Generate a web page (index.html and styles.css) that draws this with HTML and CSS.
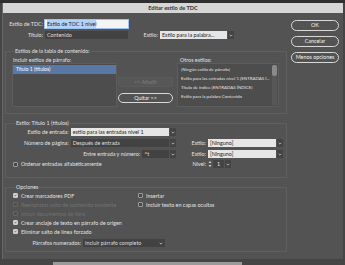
FILE: index.html
```html
<!DOCTYPE html>
<html lang="es">
<head>
    <meta charset="UTF-8">
    <title>Editar estilo de TDC</title>
    <link rel="stylesheet" href="styles.css">
</head>
<body>
    <div class="backdrop"></div>

    <div class="dialog">
        <div class="titlebar">Editar estilo de TDC</div>

        <div class="content">
            <div class="main">
                <div class="row">
                    <span class="lbl head-lbl">Estilo de TDC:</span>
                    <div class="field light focus toc-name"><span class="selected-text">Estilo de TOC 1 nivel</span></div>
                </div>
                <div class="row row-title">
                    <span class="lbl head-lbl">Título:</span>
                    <div class="field dark toc-name">Contenido</div>
                    <span class="lbl title-style-lbl">Estilo:</span>
                    <div class="field light title-style">Estilo para la palabra...</div>
                    <span class="arrow"><svg viewBox="0 0 6 4"><path d="M1 1l2 2 2-2"/></svg></span>
                </div>

                <fieldset class="group group-styles">
                    <legend>Estilos de la tabla de contenido:</legend>
                    <div class="styles-grid">
                        <span class="list-lbl">Incluir estilos de párrafo:</span>
                        <span></span>
                        <span class="list-lbl other-lbl">Otros estilos:</span>

                        <ul class="list">
                            <li class="active">Título 1 (títulos)</li>
                        </ul>
                        <div class="move-btns">
                            <div class="btn disabled add-btn">&lt;&lt; Añadir</div>
                            <div class="btn remove-btn">Quitar &gt;&gt;</div>
                        </div>
                        <div class="list list-scroll">
                            <ul>
                                <li>[Ningún estilo de párrafo]</li>
                                <li>Estilo para las entradas nivel 1 (ENTRADAS I...</li>
                                <li>Título de índice (ENTRADAS ÍNDICE)</li>
                                <li>Estilo para la palabra Contenido</li>
                            </ul>
                            <div class="scrollbar"><div class="thumb"></div></div>
                        </div>
                    </div>
                </fieldset>

                <fieldset class="group group-entry">
                    <legend>Estilo: Título 1 (títulos)</legend>
                    <div class="row">
                        <div class="left-block">
                            <span class="lbl entry-lbl">Estilo de entrada:</span>
                            <div class="field light entry-field">estilo para las entradas nivel 1</div>
                            <span class="arrow"><svg viewBox="0 0 6 4"><path d="M1 1l2 2 2-2"/></svg></span>
                        </div>
                    </div>
                    <div class="row row-gap">
                        <div class="left-block">
                            <span class="lbl entry-lbl">Número de página:</span>
                            <div class="field dark entry-field">Después de entrada</div>
                            <span class="arrow"><svg viewBox="0 0 6 4"><path d="M1 1l2 2 2-2"/></svg></span>
                        </div>
                        <div class="right-block">
                            <span class="lbl small-lbl">Estilo:</span>
                            <div class="field light none-field">[Ninguno]</div>
                            <span class="arrow"><svg viewBox="0 0 6 4"><path d="M1 1l2 2 2-2"/></svg></span>
                        </div>
                    </div>
                    <div class="row row-gap">
                        <div class="left-block">
                            <span class="lbl between-lbl">Entre entrada y número:</span>
                            <div class="field dark between-field">^t</div>
                            <span class="arrow"><svg viewBox="0 0 6 4"><path d="M1 1l2 2 2-2"/></svg></span>
                        </div>
                        <div class="right-block">
                            <span class="lbl small-lbl">Estilo:</span>
                            <div class="field light none-field">[Ninguno]</div>
                            <span class="arrow"><svg viewBox="0 0 6 4"><path d="M1 1l2 2 2-2"/></svg></span>
                        </div>
                    </div>
                    <div class="row row-gap-sm">
                        <div class="left-block">
                            <span class="check"></span>
                            <span>Ordenar entradas alfabéticamente</span>
                        </div>
                        <div class="right-block">
                            <span class="lbl small-lbl">Nivel:</span>
                            <div class="spinner">
                                <span class="spin-btns">
                                    <svg viewBox="0 0 4 8"><path d="M0.5 3l1.5-2 1.5 2zM0.5 5l1.5 2 1.5-2z"/></svg>
                                </span>
                                <span class="spin-value">1</span>
                                <span class="arrow"><svg viewBox="0 0 6 4"><path d="M1 1l2 2 2-2"/></svg></span>
                            </div>
                        </div>
                    </div>
                </fieldset>

                <fieldset class="group group-options">
                    <legend>Opciones</legend>
                    <div class="opt-row">
                        <label class="opt opt-left"><span class="check on"></span>Crear marcadores PDF</label>
                        <label class="opt"><span class="check"></span>Insertar</label>
                    </div>
                    <div class="opt-row">
                        <label class="opt opt-left disabled"><span class="check"></span>Reemplazar salto de contenido existente</label>
                        <label class="opt"><span class="check"></span>Incluir texto en capas ocultas</label>
                    </div>
                    <div class="opt-row">
                        <label class="opt disabled"><span class="check"></span>Incluir documentos de libro</label>
                    </div>
                    <div class="opt-row">
                        <label class="opt"><span class="check on"></span>Crear anclaje de texto en párrafo de origen</label>
                    </div>
                    <div class="opt-row">
                        <label class="opt"><span class="check on"></span>Eliminar salto de línea forzado</label>
                    </div>
                    <div class="row numbered-row">
                        <span class="lbl numbered-lbl">Párrafos numerados:</span>
                        <div class="field dark numbered-field">
                            Incluir párrafo completo
                            <svg viewBox="0 0 6 4"><path d="M1 1l2 2 2-2"/></svg>
                        </div>
                    </div>
                </fieldset>
            </div>

            <div class="side">
                <div class="btn side-btn">OK</div>
                <div class="btn side-btn">Cancelar</div>
                <div class="btn side-btn">Menos opciones</div>
            </div>
        </div>
    </div>

    <div class="under">
        <div class="under-bar"></div>
    </div>
</body>
</html>
```

FILE: styles.css
```css
* {
    box-sizing: border-box;
}
body {
    margin: 0;
    width: 345px;
    height: 265px;
    overflow: hidden;
    background-color: #454545;
    font-family: 'Lato', sans-serif;
    font-size: 5.4px;
    line-height: 6px;
    color: #e2e2e2;
}
.backdrop {
    height: 3px;
    background-color: #2f2f2f;
}
.dialog {
    margin-left: 2px;
    width: 341px;
    height: 256px;
    background-color: #535353;
    border-left: 1px solid #686868;
}
.titlebar {
    height: 10px;
    line-height: 10px;
    background-color: #d6d6d6;
    color: #333;
    font-weight: bold;
    font-size: 5.6px;
    text-align: center;
}
.content {
    display: flex;
    padding: 7px 0 0 2px;
}
.main {
    width: 282px;
}
.side {
    width: 48px;
    margin-left: 4px;
    display: flex;
    flex-direction: column;
    gap: 5px;
}

/* rows and fields */
.row {
    display: flex;
    align-items: center;
    height: 8px;
}
.row-title {
    margin-top: 3px;
}
.lbl {
    text-align: right;
    padding-right: 2px;
    white-space: nowrap;
}
.head-lbl {
    width: 40px;
}
.field {
    height: 8px;
    line-height: 8px;
    padding: 0 2px;
    white-space: nowrap;
    overflow: hidden;
}
.field.light {
    background-color: #e6e6e6;
    color: #1f1f1f;
}
.field.dark {
    background-color: #424242;
    color: #dedede;
}
.field.focus {
    background-color: #f4f4f4;
    box-shadow: 0 0 0 1px #9fc2f0;
    line-height: 8px;
}
.selected-text {
    background-color: #b4d2f6;
    padding: 1px 0;
}
.toc-name {
    width: 83px;
}
.title-style-lbl {
    width: 32px;
}
.title-style {
    width: 67px;
}
.arrow {
    width: 6px;
    height: 8px;
    margin-left: 1px;
    background-color: #444;
    display: flex;
    align-items: center;
    justify-content: center;
}
.arrow svg, .numbered-field svg {
    width: 4px;
    height: 3px;
    fill: none;
    stroke: #e8e8e8;
    stroke-width: 1;
}

/* group boxes */
.group {
    margin: 0;
    border: 1px solid #5f5f5f;
    padding: 0 3px 6px 7px;
    min-width: 0;
}
.group legend {
    padding: 0 1px;
    margin-left: 2px;
    line-height: 6px;
}
.group-styles {
    margin-top: 9px;
    padding-left: 6px;
}
.group-entry {
    margin-top: 6px;
    padding-bottom: 9px;
}
.group-entry > .row:first-of-type {
    margin-top: 2px;
}
.row-gap {
    margin-top: 3px;
}
.row-gap-sm {
    margin-top: 2px;
}
.group-options {
    margin-top: 6px;
    padding-bottom: 4px;
}

/* paragraph style lists */
.styles-grid {
    display: grid;
    grid-template-columns: 105px 56px 106px;
    column-gap: 0;
    margin-top: 3px;
}
.styles-grid > :nth-child(3n) {
    margin-left: 4px;
}
.list-lbl {
    height: 6px;
    padding-left: 1px;
}
.other-lbl {
    padding-left: 3px;
}
.list {
    margin: 0;
    padding: 1px 0 0;
    list-style: none;
    height: 44px;
    background-color: #4d4d4d;
    border: 1px solid #5d5d5d;
    font-size: 4.4px;
}
.list li {
    height: 9px;
    line-height: 9px;
    padding-left: 3px;
    white-space: nowrap;
}
.list li.active {
    background-color: #5a78a6;
    color: #fff;
    font-size: 5px;
}
.list-scroll {
    display: flex;
    padding: 1px 0;
}
.list-scroll ul {
    flex: 1;
    margin: 0;
    padding: 0;
    list-style: none;
    min-width: 0;
}
.scrollbar {
    width: 5px;
    margin-right: 1px;
    background-color: #575757;
}
.thumb {
    height: 11px;
    background-color: #8a8a8a;
    border-radius: 2px;
}
.move-btns {
    display: flex;
    flex-direction: column;
    padding-left: 1px;
}

/* buttons */
.btn {
    height: 10px;
    line-height: 8px;
    text-align: center;
    border: 1px solid #d9d9d9;
    border-radius: 6px;
    color: #f0f0f0;
    white-space: nowrap;
}
.side-btn {
    height: 11px;
    line-height: 9px;
}
.add-btn {
    margin-top: 14px;
}
.remove-btn {
    margin-top: 6px;
}
.btn.disabled {
    border-color: #5c5c5c;
    background-color: #575757;
    color: #7e7e7e;
    border-radius: 2px;
}

/* entry style block */
.left-block {
    width: 163px;
    display: flex;
    align-items: center;
}
.right-block {
    display: flex;
    align-items: center;
    margin-left: 14px;
}
.entry-lbl {
    width: 58px;
}
.entry-field {
    width: 99px;
}
.between-lbl {
    width: 130px;
}
.between-field {
    width: 27px;
}
.small-lbl {
    width: 18px;
}
.none-field {
    width: 68px;
}
.spinner {
    display: flex;
    align-items: center;
    height: 8px;
}
.spin-btns {
    width: 4px;
    height: 8px;
    display: flex;
}
.spin-btns svg {
    width: 4px;
    height: 8px;
    fill: #cfcfcf;
}
.spin-value {
    width: 11px;
    height: 8px;
    line-height: 8px;
    margin-left: 1px;
    text-align: center;
    background-color: #444;
}

/* checkboxes */
.check {
    width: 5px;
    height: 5px;
    margin-right: 3px;
    border: 1px solid #9b9b9b;
    background-color: #474747;
    border-radius: 1px;
    flex-shrink: 0;
}
.check.on {
    border-color: #cfcfcf;
    background-color: #d0d0d0;
    background-image: url("data:image/svg+xml,%3Csvg xmlns='http://www.w3.org/2000/svg' viewBox='0 0 5 5'%3E%3Cpath d='M1 2.6l1 1 2-2.4' fill='none' stroke='%23333' stroke-width='0.9'/%3E%3C/svg%3E");
    background-size: 100% 100%;
}
.opt-row {
    display: flex;
    height: 9px;
    align-items: center;
}
.group-options .opt-row:first-of-type {
    margin-top: 1px;
}
.opt {
    display: flex;
    align-items: center;
    white-space: nowrap;
}
.opt-left {
    width: 125px;
}
.opt.disabled {
    color: #727272;
}
.opt.disabled .check {
    border-color: #666;
    background-color: #4e4e4e;
}
.numbered-row {
    margin-top: 3px;
}
.numbered-lbl {
    width: 70px;
}
.numbered-field {
    width: 82px;
    display: flex;
    align-items: center;
    justify-content: space-between;
}

/* behind the dialog */
.under {
    height: 6px;
    display: flex;
    align-items: flex-end;
}
.under-bar {
    margin-left: 53px;
    width: 189px;
    height: 3px;
    background-color: #9a9a9a;
}
```
